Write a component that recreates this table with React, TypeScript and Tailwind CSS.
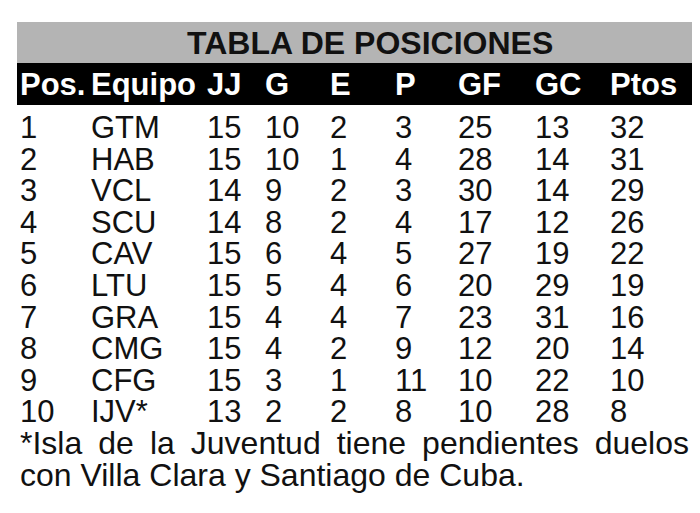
const rows: [string, string, number, number, number, number, number, number, number][] = [
  ["1", "GTM", 15, 10, 2, 3, 25, 13, 32],
  ["2", "HAB", 15, 10, 1, 4, 28, 14, 31],
  ["3", "VCL", 14, 9, 2, 3, 30, 14, 29],
  ["4", "SCU", 14, 8, 2, 4, 17, 12, 26],
  ["5", "CAV", 15, 6, 4, 5, 27, 19, 22],
  ["6", "LTU", 15, 5, 4, 6, 20, 29, 19],
  ["7", "GRA", 15, 4, 4, 7, 23, 31, 16],
  ["8", "CMG", 15, 4, 2, 9, 12, 20, 14],
  ["9", "CFG", 15, 3, 1, 11, 10, 22, 10],
  ["10", "IJV*", 13, 2, 2, 8, 10, 28, 8],
];

const headers = ["Pos.", "Equipo", "JJ", "G", "E", "P", "GF", "GC", "Ptos"];

const cols = "grid grid-cols-[71px_116px_58px_65px_65px_63px_77px_75px_1fr]";

export default function App() {
  return (
    <div
      className="w-[700px] h-[513px] bg-white pt-[22px] pl-[17px]"
      style={{ fontFamily: '"Liberation Sans", Arial, sans-serif' }}
    >
      <div className="w-[675px]">
        <div className="h-[41px] bg-[#b4b4b4] flex items-center pl-[170px]">
          <span className="text-[32px] font-bold leading-none text-[#111]">TABLA DE POSICIONES</span>
        </div>
        <div className={`${cols} h-[42px] bg-black items-center px-[3px]`}>
          {headers.map((h) => (
            <span key={h} className="text-[31px] font-bold leading-none text-white">
              {h}
            </span>
          ))}
        </div>
        <div className="pt-[7px] px-[3px] text-[#111] text-[31px] leading-[31.6px]">
          {rows.map((r) => (
            <div key={r[0]} className={`${cols} pt-[1px] h-[31.6px]`}>
              {r.map((v, i) => (
                <span key={i} className="leading-[30px]">{v}</span>
              ))}
            </div>
          ))}
          <p className="text-justify text-[32px] leading-[31.6px]">
            *Isla de la Juventud tiene pendientes duelos con Villa Clara y Santiago de Cuba.
          </p>
        </div>
      </div>
    </div>
  );
}
